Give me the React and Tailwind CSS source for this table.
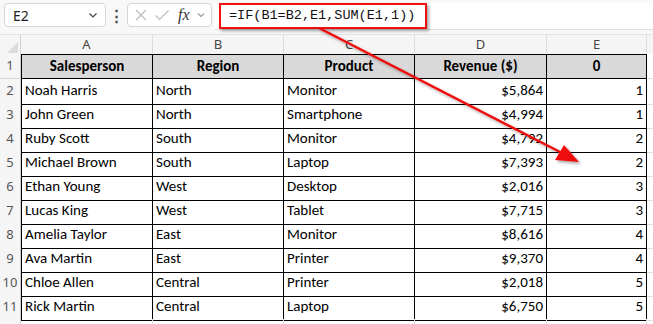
import React from "react";

const rows = [
  ["Noah Harris", "North", "Monitor", "$5,864", "1"],
  ["John Green", "North", "Smartphone", "$4,994", "1"],
  ["Ruby Scott", "South", "Monitor", "$4,792", "2"],
  ["Michael Brown", "South", "Laptop", "$7,393", "2"],
  ["Ethan Young", "West", "Desktop", "$2,016", "3"],
  ["Lucas King", "West", "Tablet", "$7,715", "3"],
  ["Amelia Taylor", "East", "Monitor", "$8,616", "4"],
  ["Ava Martin", "East", "Printer", "$9,370", "4"],
  ["Chloe Allen", "Central", "Printer", "$2,018", "5"],
  ["Rick Martin", "Central", "Laptop", "$6,750", "5"],
];

const cols = "grid grid-cols-[21px_132px_131px_131px_132px_100px_1fr]";
const cellFont = { fontFamily: "Carlito, Lato, 'Liberation Sans', sans-serif" };

function RowNum({ n }) {
  return (
    <div className="flex items-end justify-center pb-[3px] bg-[#f5f5f5] border-r border-b border-[#d4d4d4] text-[13px] text-[#555]" style={{ fontFamily: "'Noto Sans', sans-serif" }}>
      {n}
    </div>
  );
}

export default function App() {
  return (
    <div className="relative w-[653px] h-[324px] overflow-hidden bg-white" style={{ fontFamily: "'Noto Sans', sans-serif" }}>
      {/* toolbar */}
      <div className="flex items-start h-[34px] bg-[#f8f8f8] pt-[3px]">
        <div className="ml-[4px] w-[102px] h-[24px] bg-white border border-[#d6d6d6] rounded-[4px] flex items-center justify-between pl-[8px] pr-[6px]">
          <span className="text-[14px] text-[#222]">E2</span>
          <svg width="12" height="12" viewBox="0 0 12 12"><path d="M2.5 4.5 L6 8 L9.5 4.5" fill="none" stroke="#444" strokeWidth="1.2" /></svg>
        </div>
        <div className="w-[21px] h-[24px] flex items-center justify-center text-[#444] text-[15px] font-bold">⋮</div>
        <div className="w-[85px] h-[24px] bg-white border border-[#d6d6d6] rounded-[4px] flex items-center pl-[6px] gap-[6px]">
          <svg width="14" height="14" viewBox="0 0 14 14"><path d="M2 2 L12 12 M12 2 L2 12" stroke="#bdbdbd" strokeWidth="1.2" /></svg>
          <svg width="16" height="14" viewBox="0 0 16 14"><path d="M1.5 7.5 L5.5 11.5 L14.5 2.5" fill="none" stroke="#bdbdbd" strokeWidth="1.2" /></svg>
          <span className="text-[16px] italic text-[#333] ml-[2px]" style={{ fontFamily: "'Liberation Serif', serif" }}>fx</span>
          <svg width="10" height="10" viewBox="0 0 10 10"><path d="M2 3.5 L5 6.5 L8 3.5" fill="none" stroke="#999" strokeWidth="1.1" /></svg>
        </div>
        <div className="ml-[3px] flex-1 h-[27px] bg-white border-b border-[#e0e0e0] relative">
          <div className="absolute left-[4px] top-0 w-[208px] h-[26px] border-[2px] border-[#ee1111] shadow-[2px_2px_3px_rgba(0,0,0,0.35)] flex items-center pl-[8px]">
            <span className="text-[13.5px] text-[#111]" style={{ fontFamily: "'Liberation Mono', monospace" }}>=IF(B1=B2,E1,SUM(E1,1))</span>
          </div>
        </div>
      </div>

      {/* column headers */}
      <div className={`${cols} h-[20px] bg-[#f5f5f5] border-t border-[#e3e3e3]`}>
        <div className="relative border-r border-[#d4d4d4]">
          <svg className="absolute right-[2px] bottom-[2px]" width="11" height="11" viewBox="0 0 11 11"><path d="M11 0 L11 11 L0 11 Z" fill="#dcdcdc" /></svg>
        </div>
        {["A", "B", "C", "D", "E"].map((l) => (
          <div key={l} className="flex items-center justify-center text-[13px] text-[#444] border-r border-[#dcdcdc]">{l}</div>
        ))}
        <div />
      </div>

      {/* row 1 header */}
      <div className={`${cols} h-[25px]`}>
        <RowNum n="1" />
        {["Salesperson", "Region", "Product", "Revenue ($)", "0"].map((t, i) => (
          <div key={i} className={`flex items-center justify-center bg-[#d9d9d9] border-t border-b border-r border-black text-[15px] font-bold text-black ${i === 0 ? "border-l" : ""}`} style={cellFont}>
            {t}
          </div>
        ))}
        <div className="border-b border-[#e0e0e0]" />
      </div>

      {rows.map((r, idx) => (
        <div key={idx} className={`${cols} h-[24px]`}>
          <RowNum n={idx + 2} />
          {r.map((t, i) => (
            <div key={i} className={`flex items-end pb-[2px] border-b border-r border-black text-[15px] text-black ${i === 0 ? "border-l pl-[3px]" : ""} ${i === 1 || i === 2 ? "pl-[3px]" : ""} ${i >= 3 ? "justify-end pr-[3px]" : ""}`} style={cellFont}>
              {t}
            </div>
          ))}
          <div className="border-b border-[#e0e0e0]" />
        </div>
      ))}
      <div className={`${cols} h-[10px]`}>
        <div className="bg-[#f5f5f5] border-r border-[#d4d4d4]" />
        <div className="border-r border-[#e0e0e0]" />
        <div className="border-r border-[#e0e0e0]" />
        <div className="border-r border-[#e0e0e0]" />
        <div className="border-r border-[#e0e0e0]" />
        <div className="border-r border-[#e0e0e0]" />
        <div />
      </div>

      {/* annotation arrow */}
      <svg className="absolute left-0 top-0 pointer-events-none" width="653" height="324" viewBox="0 0 653 324">
        <defs>
          <filter id="sh" x="-10%" y="-10%" width="130%" height="130%">
            <feDropShadow dx="2" dy="2" stdDeviation="1.5" floodColor="#000" floodOpacity="0.35" />
          </filter>
        </defs>
        <g filter="url(#sh)">
          <line x1="319" y1="28" x2="562" y2="153" stroke="#ee1111" strokeWidth="2.5" />
          <path d="M579 162 L555 160 L564 145 Z" fill="#ee1111" />
        </g>
      </svg>
    </div>
  );
}
